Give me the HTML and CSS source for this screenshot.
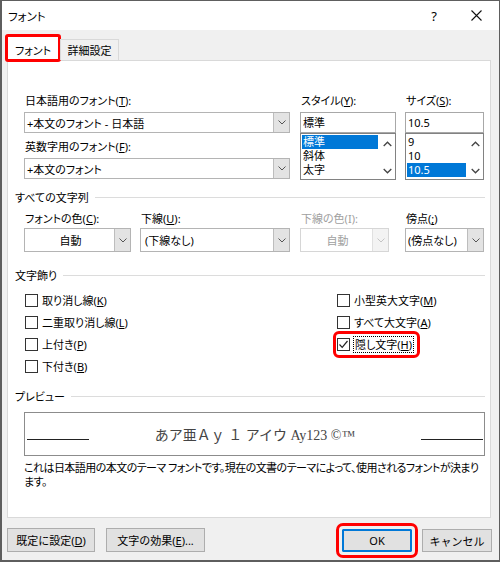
FILE: index.html
```html
<!DOCTYPE html>
<html lang="ja">
<head>
    <meta charset="UTF-8" />
    <title>フォント</title>
    <link rel="stylesheet" href="styles.css">
</head>
<body>
    <div class="window">
        <!-- Title bar -->
        <div class="titlebar">
            <span class="title">フォント</span>
            <span class="help">?</span>
            <span class="close">
                <svg width="11" height="11" viewBox="0 0 11 11"><path d="M0.5 0.5 L10.5 10.5 M10.5 0.5 L0.5 10.5" stroke="#111" stroke-width="1.1" fill="none"/></svg>
            </span>
        </div>

        <div class="dialog-body">
            <!-- Tabs -->
            <div class="tabs">
                <div class="tab tab-active">フォント</div>
                <div class="tab">詳細設定</div>
            </div>

            <div class="panel">
                <!-- Fonts, style, size -->
                <div class="row-fonts">
                    <div class="col-font">
                        <div class="field-label">日本語用のフォント(<u>T</u>):</div>
                        <div class="combo">
                            <span class="combo-text">+本文のフォント - 日本語</span>
                            <span class="combo-btn"><svg width="8" height="5" viewBox="0 0 8 5"><polyline points="0.5,0.5 4,4 7.5,0.5" fill="none" stroke="#555" stroke-width="1"/></svg></span>
                        </div>
                        <div class="field-label second">英数字用のフォント(<u>F</u>):</div>
                        <div class="combo">
                            <span class="combo-text">+本文のフォント</span>
                            <span class="combo-btn"><svg width="8" height="5" viewBox="0 0 8 5"><polyline points="0.5,0.5 4,4 7.5,0.5" fill="none" stroke="#555" stroke-width="1"/></svg></span>
                        </div>
                    </div>
                    <div class="col-style">
                        <div class="field-label">スタイル(<u>Y</u>):</div>
                        <div class="textbox">標準</div>
                        <div class="listbox">
                            <div class="list-items">
                                <div class="item selected">標準</div>
                                <div class="item">斜体</div>
                                <div class="item">太字</div>
                            </div>
                            <div class="scroll">
                                <svg width="9" height="6" viewBox="0 0 9 6"><polyline points="0.7,5 4.5,1.2 8.3,5" fill="none" stroke="#444" stroke-width="1.3"/></svg>
                                <svg width="9" height="6" viewBox="0 0 9 6"><polyline points="0.7,1 4.5,4.8 8.3,1" fill="none" stroke="#444" stroke-width="1.3"/></svg>
                            </div>
                        </div>
                    </div>
                    <div class="col-size">
                        <div class="field-label">サイズ(<u>S</u>):</div>
                        <div class="textbox">10.5</div>
                        <div class="listbox">
                            <div class="list-items">
                                <div class="item">9</div>
                                <div class="item">10</div>
                                <div class="item selected">10.5</div>
                            </div>
                            <div class="scroll">
                                <svg width="9" height="6" viewBox="0 0 9 6"><polyline points="0.7,5 4.5,1.2 8.3,5" fill="none" stroke="#444" stroke-width="1.3"/></svg>
                                <svg width="9" height="6" viewBox="0 0 9 6"><polyline points="0.7,1 4.5,4.8 8.3,1" fill="none" stroke="#444" stroke-width="1.3"/></svg>
                            </div>
                        </div>
                    </div>
                </div>

                <!-- All text -->
                <div class="group-head">すべての文字列</div>
                <div class="row-text">
                    <div class="col-color">
                        <div class="field-label">フォントの色(<u>C</u>):</div>
                        <div class="combo tall">
                            <span class="combo-text centered">自動</span>
                            <span class="combo-btn"><svg width="8" height="5" viewBox="0 0 8 5"><polyline points="0.5,0.5 4,4 7.5,0.5" fill="none" stroke="#555" stroke-width="1"/></svg></span>
                        </div>
                    </div>
                    <div class="col-underline">
                        <div class="field-label">下線(<u>U</u>):</div>
                        <div class="combo tall">
                            <span class="combo-text pad">(下線なし)</span>
                            <span class="combo-btn"><svg width="8" height="5" viewBox="0 0 8 5"><polyline points="0.5,0.5 4,4 7.5,0.5" fill="none" stroke="#555" stroke-width="1"/></svg></span>
                        </div>
                    </div>
                    <div class="col-ucolor">
                        <div class="field-label disabled">下線の色(I):</div>
                        <div class="combo tall off">
                            <span class="combo-text centered">自動</span>
                            <span class="combo-btn"><svg width="8" height="5" viewBox="0 0 8 5"><polyline points="0.5,0.5 4,4 7.5,0.5" fill="none" stroke="#c4c4c4" stroke-width="1"/></svg></span>
                        </div>
                    </div>
                    <div class="col-emph">
                        <div class="field-label">傍点(<u>;</u>)</div>
                        <div class="combo tall">
                            <span class="combo-text">(傍点なし)</span>
                            <span class="combo-btn"><svg width="8" height="5" viewBox="0 0 8 5"><polyline points="0.5,0.5 4,4 7.5,0.5" fill="none" stroke="#555" stroke-width="1"/></svg></span>
                        </div>
                    </div>
                </div>

                <!-- Effects -->
                <div class="group-head">文字飾り</div>
                <div class="checks">
                    <div class="check"><span class="cb"></span><span>取り消し線(<u>K</u>)</span></div>
                    <div class="check"><span class="cb"></span><span>小型英大文字(<u>M</u>)</span></div>
                    <div class="check"><span class="cb"></span><span>二重取り消し線(<u>L</u>)</span></div>
                    <div class="check"><span class="cb"></span><span>すべて大文字(<u>A</u>)</span></div>
                    <div class="check"><span class="cb"></span><span>上付き(<u>P</u>)</span></div>
                    <div class="check">
                        <span class="marked">
                            <span class="cb"><svg width="11" height="11" viewBox="0 0 11 11"><polyline points="1.5,5.5 4.2,8.3 9.5,2" fill="none" stroke="#222" stroke-width="1.2"/></svg></span>
                            <span class="focus">隠し文字(<u>H</u>)</span>
                        </span>
                    </div>
                    <div class="check"><span class="cb"></span><span>下付き(<u>B</u>)</span></div>
                </div>

                <!-- Preview -->
                <div class="group-head">プレビュー</div>
                <div class="preview">
                    <span class="rule"></span>
                    <span class="sample">あア亜Ａｙ １ アイウ Ay123 ©™</span>
                    <span class="rule"></span>
                </div>
                <p class="note">これは日本語用の本文のテーマ フォントです。現在の文書のテーマによって、使用されるフォントが決まり<br>ます。</p>
            </div>

            <!-- Bottom buttons -->
            <div class="buttons">
                <button class="btn wide">既定に設定(<u>D</u>)</button>
                <button class="btn wider">文字の効果(<u>E</u>)...</button>
                <span class="spacer"></span>
                <button class="btn ok">OK</button>
                <button class="btn">キャンセル</button>
            </div>
        </div>
    </div>
</body>
</html>
```

FILE: styles.css
```css
/* Basic Styling */
body {
    margin: 0;
    background-color: #ffffff;
    font-family: "Noto Sans", "Noto Sans CJK JP", sans-serif;
    font-size: 11px;
    color: #000000;
    font-feature-settings: "palt";
}
u { text-decoration: underline; text-underline-offset: 1px; }

.window {
    width: 500px;
    height: 562px;
    box-sizing: border-box;
    border: 1px solid #5e5e5e;
    border-left-width: 2px;
    border-bottom-width: 2px;
    background-color: #f0f0f0;
    display: flex;
    flex-direction: column;
}

/* Title bar */
.titlebar {
    height: 29px;
    background-color: #ffffff;
    display: flex;
    align-items: center;
}
.title { padding-left: 6px; flex: 1; font-size: 11.5px; }
.help { width: 14px; text-align: center; margin-right: 30px; font-size: 13px; }
.close { width: 12px; margin-right: 16px; display: flex; }

/* Tabs */
.dialog-body { flex: 1; display: flex; flex-direction: column; }
.tabs {
    display: flex;
    align-items: flex-end;
    height: 26px;
    margin: 5px 0 -1px 4px;
    position: relative;
    z-index: 1;
}
.tab {
    height: 21px;
    width: 59px;
    line-height: 21px;
    box-sizing: border-box;
    text-align: center;
    border: 1px solid #d9d9d9;
    border-bottom: none;
    margin-bottom: 1px;
    background-color: #f0f0f0;
}
.tab-active {
    height: 26px;
    width: 54px;
    line-height: 29px;
    margin-bottom: 0;
    background-color: #ffffff;
    outline: 3px solid #ff0000;
    outline-offset: -2px;
    border-radius: 2px;
}

/* Panel */
.panel {
    height: 458px;
    box-sizing: border-box;
    margin: 0 8px 0 5px;
    border: 1px solid #d9d9d9;
    background-color: #ffffff;
    padding: 32px 5px 0 16px;
}
.field-label { height: 16px; line-height: 16px; margin-bottom: 3px; padding-left: 1px; }
.field-label.second { margin-top: 6px; }
.field-label.disabled { color: #a0a0a0; }

.combo {
    display: flex;
    height: 21px;
    box-sizing: border-box;
    border: 1px solid #b4b4b4;
    background-color: #ffffff;
}
.combo.tall { height: 24px; }
.combo-text { flex: 1; padding-left: 2px; display: flex; align-items: center; white-space: nowrap; }
.combo-text.centered { justify-content: center; }
.combo-text.pad { padding-left: 4px; }
.combo-btn {
    width: 15px;
    background-color: #e3e3e3;
    border-left: 1px solid #bdbdbd;
    display: flex;
    align-items: center;
    justify-content: center;
}
.combo.off { border-color: #d6d6d6; color: #a0a0a0; }
.combo.off .combo-btn { background-color: #f3f3f3; border-left-color: #e0e0e0; }

.row-fonts { display: flex; }
.col-font { width: 266px; margin-right: 10px; }
.col-style { width: 96px; margin-right: 9px; }
.col-size { width: 79px; }

.textbox {
    height: 21px;
    box-sizing: border-box;
    border: 1px solid #a8a8a8;
    padding-left: 2px;
    line-height: 19px;
}
.listbox {
    height: 47px;
    box-sizing: border-box;
    border: 1px solid #828282;
    display: flex;
}
.list-items { flex: 1; padding: 1px 1px 0 1px; }
.item { height: 14px; line-height: 14px; padding-left: 1px; }
.item.selected { background-color: #0078d7; color: #ffffff; }
.scroll {
    width: 16px;
    display: flex;
    flex-direction: column;
    justify-content: space-between;
    align-items: center;
    padding: 7px 0 5px 0;
}

/* Group headers with line */
.group-head {
    display: flex;
    align-items: center;
    height: 16px;
    margin-left: -9px;
    margin-top: 9px;
}
.group-head::after {
    content: "";
    flex: 1;
    height: 1px;
    background-color: #dcdcdc;
    margin-left: 6px;
}

.row-text { display: flex; margin-top: 6px; }
.row-text .field-label { margin-bottom: 1px; }
.col-color { width: 107px; margin-right: 9px; }
.col-underline { width: 150px; margin-right: 10px; }
.col-ucolor { width: 89px; margin-right: 16px; }
.col-emph { width: 79px; }

.row-text + .group-head { margin-top: 15px; }

/* Check boxes */
.checks {
    display: grid;
    grid-template-columns: 312px 1fr;
    grid-auto-rows: 22px;
    margin-top: 6px;
    padding-left: 1px;
}
.check { display: flex; align-items: center; gap: 4px; }
.cb {
    width: 13px;
    height: 13px;
    box-sizing: border-box;
    border: 1px solid #333333;
    background-color: #ffffff;
    display: flex;
    align-items: center;
    justify-content: center;
}
.marked {
    display: flex;
    align-items: center;
    gap: 3px;
    height: 19px;
    padding-right: 2px;
    outline: 3px solid #ff0000;
    outline-offset: 1px;
    border-radius: 2px;
}
.focus { border: 1px dotted #000000; padding: 0 1px; line-height: 15px; }

.checks + .group-head { margin-top: 11px; }

/* Preview */
.preview {
    margin-top: 8px;
    height: 44px;
    box-sizing: border-box;
    border: 1px solid #8c8c8c;
    display: flex;
    align-items: center;
    padding: 0 1px 0 2px;
}
.rule { width: 62px; height: 1px; background-color: #222222; margin-top: 10px; }
.sample {
    flex: 1;
    text-align: center;
    font-family: "Liberation Serif", "Noto Sans CJK JP", serif;
    font-size: 14px;
    color: #444444;
    font-feature-settings: normal;
}
.note { margin: 5px 0 0 0; line-height: 14px; white-space: nowrap; letter-spacing: -0.55px; }

/* Bottom buttons */
.buttons { display: flex; margin: 10px 7px 0 5px; align-items: flex-start; }
.spacer { flex: 1; }
.btn {
    height: 24px;
    width: 70px;
    font-family: inherit;
    font-size: 11px;
    background-color: #e1e1e1;
    border: 1px solid #adadad;
    padding: 0;
    color: #000000;
}
.btn.wide { width: 88px; margin-right: 11px; }
.btn.wider { width: 99px; }
.btn.ok {
    height: 23px;
    margin-top: 1px;
    margin-right: 10px;
    border-color: #0078d7;
    box-shadow: inset 0 0 0 1px #0078d7;
    outline: 3px solid #ff0000;
    outline-offset: 3px;
    border-radius: 1px;
}
.btn:last-child { height: 23px; margin-top: 1px; }
```
